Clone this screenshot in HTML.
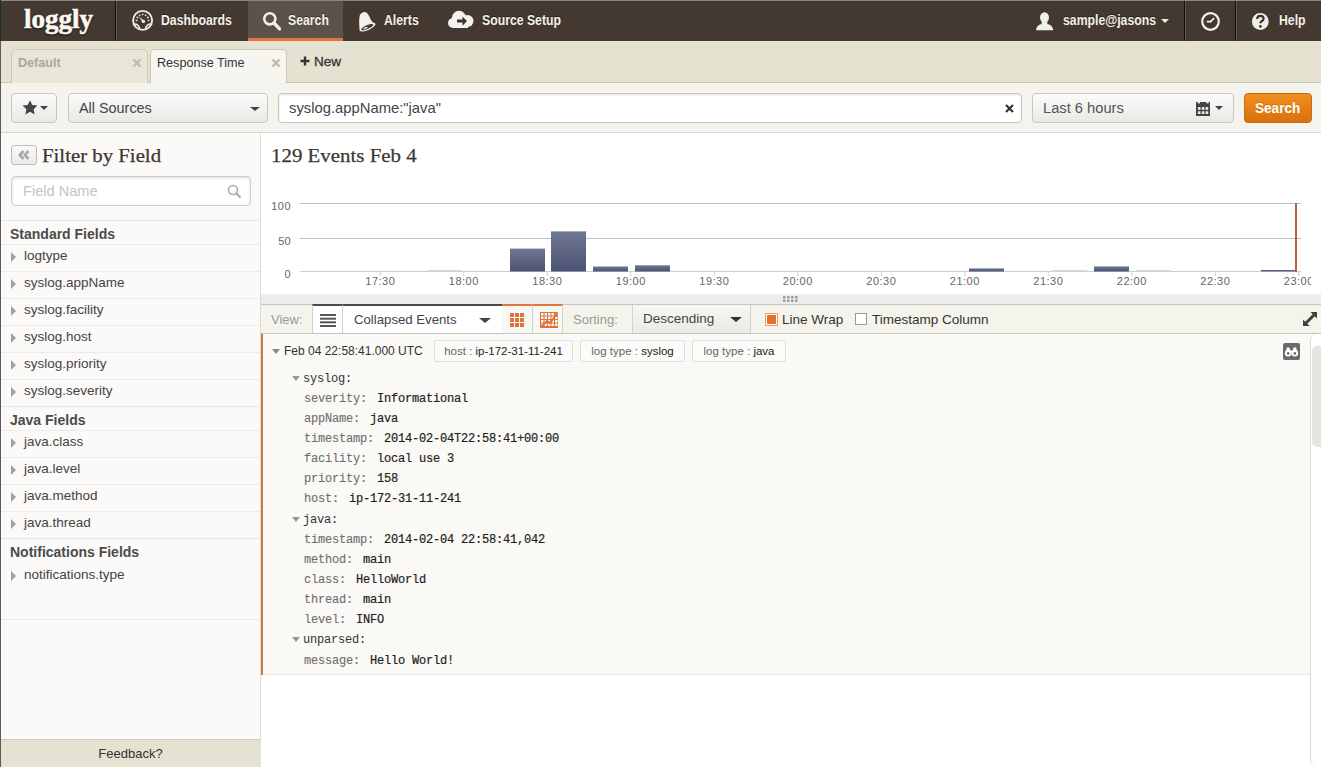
<!DOCTYPE html>
<html><head><meta charset="utf-8">
<style>
*{box-sizing:border-box;margin:0;padding:0}
html,body{width:1321px;height:767px;overflow:hidden;background:#fff;font-family:"Liberation Sans",sans-serif;position:relative}
.a{position:absolute}
/* nav */
#nav{left:0;top:0;width:1321px;height:41px;background:#433931;border-top:1px solid #8a8580}
#nav .sep{top:0;width:2px;height:40px;background:#110d0b;border-right:1px solid #635a53}
.nt{color:#f4f1ea;font-weight:700;font-size:14px;top:11px;white-space:nowrap;transform:scaleX(0.875);transform-origin:0 0;text-shadow:0 -1px 0 rgba(0,0,0,.4)}
#logo{left:24px;top:3px;font-family:"Liberation Serif",serif;font-weight:700;font-size:27px;color:#fbf8f0;-webkit-text-stroke:0.6px #fbf8f0;text-shadow:0 1px 2px #000}
/* tabs */
#tabs{left:0;top:41px;width:1321px;height:42px;background:#e6e2d2;border-bottom:1px solid #cbc6b4}
.tab{top:8px;height:34px;border:1px solid #cfcab8;border-bottom:none;border-radius:5px 5px 0 0}
.tab .t{left:6px;top:6px;font-size:12.6px;font-weight:700;white-space:nowrap}
.tab .x{top:7px;font-size:14px;font-weight:700;color:#bbb}
/* search row */
#srow{left:0;top:83px;width:1321px;height:50px;background:#f4f3ed;border-bottom:1px solid #d9d6cc}
.caret{width:0;height:0;border-style:solid;border-width:4px 4px 0 4px;border-color:#444 transparent transparent transparent}
.btn{border:1px solid #c9c7c0;border-radius:4px;background:linear-gradient(#fbfbfa,#e8e8e6)}
/* sidebar */
#side{left:0;top:133px;width:261px;height:634px;background:#fbfaf8;border-right:1px solid #dedbd3;border-left:1px solid #777}
.mono{font-family:"Liberation Mono",monospace;font-size:12px;letter-spacing:-0.2px;white-space:pre}
.fh{left:9px;font-size:14px;font-weight:700;color:#4b4b4b}
.tri{width:0;height:0;border-top:5px solid transparent;border-bottom:5px solid transparent;border-left:5px solid #a0a0a0}
.fn{font-size:13.5px;color:#444;white-space:nowrap}
</style></head>
<body>
<div id="nav" class="a">
  <div id="logo" class="a">loggly</div>
  <div class="a sep" style="left:115px"></div>
  <div class="a" style="left:248px;top:0;width:95px;height:40px;background:#5a524b"></div>
  <div class="a" style="left:248px;top:37px;width:95px;height:3px;background:#e07544"></div>
  <svg class="a" style="left:131px;top:8px" width="24" height="24" viewBox="0 0 24 24"><circle cx="11.6" cy="11.4" r="9.5" stroke="#f0ece6" stroke-width="1.9" fill="none"/><path d="M4.80 11.40 L6.40 11.40" stroke="#f0ece6" stroke-width="1.5"/><path d="M5.71 8.00 L7.10 8.80" stroke="#f0ece6" stroke-width="1.5"/><path d="M8.20 5.51 L9.00 6.90" stroke="#f0ece6" stroke-width="1.5"/><path d="M11.60 4.60 L11.60 6.20" stroke="#f0ece6" stroke-width="1.5"/><path d="M15.00 5.51 L14.20 6.90" stroke="#f0ece6" stroke-width="1.5"/><path d="M17.49 8.00 L16.10 8.80" stroke="#f0ece6" stroke-width="1.5"/><path d="M18.40 11.40 L16.80 11.40" stroke="#f0ece6" stroke-width="1.5"/><path d="M7.6 7.2 L12.9 11.6 L11.6 12.9 Z" fill="#f0ece6"/><circle cx="12.4" cy="12.4" r="1.7" fill="#f0ece6"/><path d="M2.6 15.2 Q6.8 14.2 9 19.8 M20.6 15.2 Q16.4 14.2 14.2 19.8" stroke="#f0ece6" stroke-width="1.5" fill="none"/></svg>
<svg class="a" style="left:260px;top:8px" width="24" height="24" viewBox="0 0 24 24"><circle cx="9.8" cy="9.8" r="5.6" stroke="#f2efea" stroke-width="2.6" fill="none"/><path d="M14 14 L19.5 19.8" stroke="#f2efea" stroke-width="3.4" stroke-linecap="round"/></svg>
<svg class="a" style="left:356px;top:8px" width="22" height="24" viewBox="0 0 22 24"><path d="M7.2 3.2 Q9.6 2.6 11.2 4.2 Q13.4 6.6 14.4 10 Q15.4 13 19.2 14.6 L19.4 16 Q12 22 3.8 21.5 Q3.2 18 3.2 15 Q3 9 3.8 6.2 Q5 3.8 7.2 3.2 Z" fill="#f4f2ee"/><ellipse cx="11.3" cy="18.2" rx="8.3" ry="3" transform="rotate(-24 11.3 18.2)" fill="#f4f2ee"/><ellipse cx="11.3" cy="18.1" rx="6.6" ry="1.9" transform="rotate(-24 11.3 18.1)" fill="#433931"/><ellipse cx="9.6" cy="19" rx="2.4" ry="0.9" transform="rotate(-24 9.6 19)" fill="#f4f2ee"/></svg>
<svg class="a" style="left:446px;top:8px" width="30" height="22" viewBox="0 0 30 22"><g fill="#f4f2ee"><circle cx="13" cy="9" r="7.2"/><circle cx="21.5" cy="12" r="6"/><circle cx="7" cy="14" r="5"/><rect x="7" y="12" width="15" height="7" /></g><path d="M11 10.5 H16.5 V7.5 L21 12 L16.5 16.7 V13.5 H11 Z" fill="#3a322d"/></svg>
<svg class="a" style="left:1034px;top:9px" width="22" height="22" viewBox="0 0 22 22"><g fill="#f2f0ec"><ellipse cx="10.5" cy="7.5" rx="4.5" ry="5.2"/><path d="M8 11 H13 L13.5 14 Q18.5 15 19.2 19.8 Q19 20.3 18.5 20.3 H2.5 Q2 20.3 2 19.8 Q2.7 15 7.5 14 Z"/></g></svg>
<div class="a caret" style="left:1161px;top:18px;border-width:4px 4px 0 4px;border-top-color:#f0ece6"></div>
<svg class="a" style="left:1199px;top:9px" width="23" height="23" viewBox="0 0 23 23"><circle cx="11.5" cy="11.5" r="8.3" stroke="#f4f2ee" stroke-width="2.2" fill="none"/><path d="M7.8 11.6 H11.5 L15.2 8.1" stroke="#f4f2ee" stroke-width="1.6" fill="none" stroke-linejoin="round"/><circle cx="11.5" cy="11.5" r="1.1" fill="#f4f2ee"/></svg>
<svg class="a" style="left:1250px;top:10px" width="21" height="21" viewBox="0 0 21 21"><circle cx="10.3" cy="10.5" r="8.4" fill="#f0eeea"/><path d="M7.2 8 Q7.2 4.8 10.4 4.8 Q13.6 4.8 13.6 7.6 Q13.6 9.3 11.6 10.3 Q10.4 10.9 10.4 12.2" stroke="#3a322d" stroke-width="2.2" fill="none"/><circle cx="10.4" cy="15.4" r="1.4" fill="#3a322d"/></svg>
<div class="a nt" style="left:161px">Dashboards</div>
  <div class="a nt" style="left:288px">Search</div>
  <div class="a nt" style="left:384px">Alerts</div>
  <div class="a nt" style="left:482px">Source Setup</div>
  <div class="a nt" style="left:1063px">sample@jasons</div>
  <div class="a sep" style="left:1184px"></div>
  <div class="a sep" style="left:1235px"></div>
  <div class="a nt" style="left:1279px">Help</div>
</div>
<div id="tabs" class="a">
  <div class="a tab" style="left:11px;width:137px;background:#e9e6d8"><div class="a t" style="color:#aaa89e">Default</div><svg class="a" style="left:120px;top:8px" width="10" height="10" viewBox="0 0 10 10"><path d="M1.5 1.5 L8.5 8.5 M8.5 1.5 L1.5 8.5" stroke="#bdbab0" stroke-width="2.4"/></svg></div>
  <div class="a tab" style="left:150px;width:137px;height:35px;background:#f6f5ef;border-color:#cbc6b4"><div class="a t" style="color:#333;font-weight:400">Response Time</div><svg class="a" style="left:120px;top:8px" width="10" height="10" viewBox="0 0 10 10"><path d="M1.5 1.5 L8.5 8.5 M8.5 1.5 L1.5 8.5" stroke="#bdbab0" stroke-width="2.4"/></svg></div>
  <svg class="a" style="left:300px;top:15px" width="10" height="10" viewBox="0 0 10 10"><path d="M5 0.5 V9.5 M0.5 5 H9.5" stroke="#333" stroke-width="2.4"/></svg><div class="a" style="left:314px;top:13px;font-size:13.5px;color:#333;-webkit-text-stroke:0.3px #333;white-space:nowrap">New</div>
</div>
<div id="srow" class="a">
  <div class="a btn" style="left:11px;top:10px;width:46px;height:30px">
    <svg class="a" style="left:10px;top:5px" width="16" height="17" viewBox="0 -0.3 15 15.6"><path d="M7.50 0.60 L9.62 5.09 L14.54 5.71 L10.92 9.11 L11.85 13.99 L7.50 11.60 L3.15 13.99 L4.08 9.11 L0.46 5.71 L5.38 5.09 Z" fill="#444"/></svg>
    <div class="a caret" style="left:28px;top:12px"></div>
  </div>
  <div class="a btn" style="left:68px;top:10px;width:200px;height:30px">
    <div class="a" style="left:10px;top:6px;font-size:14.4px;color:#444;white-space:nowrap">All Sources</div>
    <div class="a caret" style="left:181px;top:13px;border-width:4px 5px 0 5px"></div>
  </div>
  <div class="a" style="left:278px;top:10px;width:744px;height:30px;background:#fff;border:1px solid #c9c7c0;border-radius:4px;box-shadow:inset 0 1px 2px rgba(0,0,0,.12)">
    <div class="a" style="left:10px;top:6px;font-size:14.8px;color:#444;white-space:nowrap">syslog.appName:"java"</div>
    <svg class="a" style="left:726px;top:10px" width="9" height="9" viewBox="0 0 9 9"><path d="M1 1 L8 8 M8 1 L1 8" stroke="#333" stroke-width="2.2"/></svg>
  </div>
  <div class="a btn" style="left:1032px;top:10px;width:202px;height:30px">
    <div class="a" style="left:10px;top:6px;font-size:14.7px;color:#555;white-space:nowrap">Last 6 hours</div>
    <svg class="a" style="left:163px;top:8px" width="14" height="14" viewBox="0 0 14 14"><rect x="0" y="0" width="14" height="14" fill="#444"/><g fill="#efefed"><rect x="1.7" y="0" width="2.3" height="1.4"/><rect x="10.3" y="0" width="2.3" height="1.4"/><rect x="1.9" y="5.1" width="2.6" height="2.7"/><rect x="1.9" y="9.3" width="2.6" height="2.7"/><rect x="5.8" y="5.1" width="2.6" height="2.7"/><rect x="5.8" y="9.3" width="2.6" height="2.7"/><rect x="9.6" y="5.1" width="2.6" height="2.7"/><rect x="9.6" y="9.3" width="2.6" height="2.7"/></g></svg>
    <div class="a caret" style="left:182px;top:12px"></div>
  </div>
  <div class="a" style="left:1244px;top:10px;width:68px;height:30px;background:linear-gradient(#f0901f,#d9700c);border:1px solid #c76a10;border-radius:4px">
    <div class="a" style="left:10px;top:6px;font-size:14px;font-weight:700;color:#fff;white-space:nowrap;transform:scaleX(0.97);transform-origin:0 0;text-shadow:0 -1px 0 rgba(0,0,0,.15)">Search</div>
  </div>
</div>
<div id="side" class="a"></div>
<!--SIDE-->
<div class="a" style="left:11px;top:145px;width:26px;height:20px;border:1px solid #bdbbb5;border-radius:3px;background:linear-gradient(#fafafa,#ebebea)"><svg class="a" style="left:6px;top:4px" width="12" height="10" viewBox="0 0 12 10"><path d="M5.5 1 L1.8 5 L5.5 9 M10.5 1 L6.8 5 L10.5 9" stroke="#a8a8a8" stroke-width="2.6" fill="none"/></svg></div>
<div class="a" style="left:42px;top:145px;font-family:'Liberation Serif',serif;font-size:19px;color:#3d3733;white-space:nowrap;transform:scaleX(1.095);transform-origin:0 0;-webkit-text-stroke:0.25px #3d3733">Filter by Field</div>
<div class="a" style="left:11px;top:176px;width:240px;height:30px;background:#fff;border:1px solid #cfcdc6;border-radius:4px;box-shadow:inset 0 1px 3px rgba(0,0,0,.15)"><div class="a" style="left:11px;top:6px;font-size:14.6px;color:#c4c4c4;white-space:nowrap">Field Name</div><svg class="a" style="left:215px;top:7px" width="15" height="15" viewBox="0 0 15 15"><circle cx="6" cy="6" r="4.5" stroke="#aaa" stroke-width="1.6" fill="none"/><path d="M9.2 9.2 L13.5 13.5" stroke="#aaa" stroke-width="2.2"/></svg></div>
<div class="a" style="left:1px;top:220px;width:259px;height:1px;background:#e8e6e0"></div>
<div class="a fh" style="left:10px;top:226px">Standard Fields</div>
<div class="a" style="left:1px;top:244px;width:259px;height:1px;background:#edebe6"></div>
<div class="a tri" style="left:11px;top:252px"></div><div class="a fn" style="left:24px;top:248px">logtype</div>
<div class="a" style="left:1px;top:271px;width:259px;height:1px;background:#edebe6"></div>
<div class="a tri" style="left:11px;top:279px"></div><div class="a fn" style="left:24px;top:275px">syslog.appName</div>
<div class="a" style="left:1px;top:298px;width:259px;height:1px;background:#edebe6"></div>
<div class="a tri" style="left:11px;top:306px"></div><div class="a fn" style="left:24px;top:302px">syslog.facility</div>
<div class="a" style="left:1px;top:325px;width:259px;height:1px;background:#edebe6"></div>
<div class="a tri" style="left:11px;top:333px"></div><div class="a fn" style="left:24px;top:329px">syslog.host</div>
<div class="a" style="left:1px;top:352px;width:259px;height:1px;background:#edebe6"></div>
<div class="a tri" style="left:11px;top:360px"></div><div class="a fn" style="left:24px;top:356px">syslog.priority</div>
<div class="a" style="left:1px;top:379px;width:259px;height:1px;background:#edebe6"></div>
<div class="a tri" style="left:11px;top:387px"></div><div class="a fn" style="left:24px;top:383px">syslog.severity</div>
<div class="a" style="left:1px;top:406px;width:259px;height:1px;background:#e8e6e0"></div>
<div class="a fh" style="left:10px;top:412px">Java Fields</div>
<div class="a" style="left:1px;top:430px;width:259px;height:1px;background:#edebe6"></div>
<div class="a tri" style="left:11px;top:438px"></div><div class="a fn" style="left:24px;top:434px">java.class</div>
<div class="a" style="left:1px;top:457px;width:259px;height:1px;background:#edebe6"></div>
<div class="a tri" style="left:11px;top:465px"></div><div class="a fn" style="left:24px;top:461px">java.level</div>
<div class="a" style="left:1px;top:484px;width:259px;height:1px;background:#edebe6"></div>
<div class="a tri" style="left:11px;top:492px"></div><div class="a fn" style="left:24px;top:488px">java.method</div>
<div class="a" style="left:1px;top:511px;width:259px;height:1px;background:#edebe6"></div>
<div class="a tri" style="left:11px;top:519px"></div><div class="a fn" style="left:24px;top:515px">java.thread</div>
<div class="a" style="left:1px;top:538px;width:259px;height:1px;background:#e8e6e0"></div>
<div class="a fh" style="left:10px;top:544px">Notifications Fields</div>
<div class="a tri" style="left:11px;top:571px"></div><div class="a fn" style="left:24px;top:567px">notifications.type</div>
<div class="a" style="left:1px;top:619px;width:259px;height:1px;background:#edebe6"></div>
<div class="a" style="left:0;top:739px;width:261px;height:28px;background:#e6e2d2;border-top:1px solid #cfcab8;border-left:1px solid #777"><div class="a" style="left:0;width:259px;top:6px;text-align:center;font-size:13px;color:#333">Feedback?</div></div>
<!--/SIDE-->

<div class="a" style="left:261px;top:133px;width:1060px;height:161px;background:#fff"></div>
<div class="a" style="left:271px;top:145px;font-family:'Liberation Serif',serif;font-size:19px;color:#3d3733;white-space:nowrap;transform:scaleX(1.1);transform-origin:0 0;-webkit-text-stroke:0.25px #3d3733">129 Events Feb 4</div>
<svg class="a" style="left:261px;top:190px" width="1060" height="104" viewBox="261 190 1060 104"><line x1="300" y1="203.5" x2="1301" y2="203.5" stroke="#c0c0c0" stroke-width="1"/><text x="291" y="209.5" text-anchor="end" font-family="Liberation Sans" font-size="11" letter-spacing="0.5" fill="#666">100</text><line x1="300" y1="238.5" x2="1301" y2="238.5" stroke="#c0c0c0" stroke-width="1"/><text x="291" y="244.5" text-anchor="end" font-family="Liberation Sans" font-size="11" letter-spacing="0.3" fill="#666">50</text><line x1="300" y1="271.5" x2="1301" y2="271.5" stroke="#c8d0dc" stroke-width="1"/><text x="291" y="277.5" text-anchor="end" font-family="Liberation Sans" font-size="11" letter-spacing="0.3" fill="#666">0</text><defs><linearGradient id="bg" x1="0" y1="0" x2="0" y2="1"><stop offset="0" stop-color="#6f7794"/><stop offset="1" stop-color="#4c5372"/></linearGradient></defs><rect x="510" y="248.6" width="35" height="22.900000000000006" fill="url(#bg)"/><rect x="551" y="231.4" width="35" height="40.099999999999994" fill="url(#bg)"/><rect x="593" y="266.5" width="35" height="5.0" fill="url(#bg)"/><rect x="635" y="265.3" width="35" height="6.199999999999989" fill="url(#bg)"/><rect x="969" y="268.4" width="35" height="3.1000000000000227" fill="url(#bg)"/><rect x="1094" y="266.4" width="35" height="5.100000000000023" fill="url(#bg)"/><rect x="427" y="270" width="35" height="1.5" fill="#d3d8e2"/><rect x="1052" y="270" width="35" height="1.5" fill="#d3d8e2"/><rect x="1136" y="270" width="35" height="1.5" fill="#d3d8e2"/><rect x="1261" y="270" width="35" height="1.5" fill="#5a6180"/><line x1="380.3" y1="272" x2="380.3" y2="276" stroke="#c8d0dc"/><text x="380.3" y="285" text-anchor="middle" font-family="Liberation Sans" font-size="11" letter-spacing="0.5" fill="#666">17:30</text><line x1="463.8" y1="272" x2="463.8" y2="276" stroke="#c8d0dc"/><text x="463.8" y="285" text-anchor="middle" font-family="Liberation Sans" font-size="11" letter-spacing="0.5" fill="#666">18:00</text><line x1="547.3" y1="272" x2="547.3" y2="276" stroke="#c8d0dc"/><text x="547.3" y="285" text-anchor="middle" font-family="Liberation Sans" font-size="11" letter-spacing="0.5" fill="#666">18:30</text><line x1="630.8" y1="272" x2="630.8" y2="276" stroke="#c8d0dc"/><text x="630.8" y="285" text-anchor="middle" font-family="Liberation Sans" font-size="11" letter-spacing="0.5" fill="#666">19:00</text><line x1="714.3" y1="272" x2="714.3" y2="276" stroke="#c8d0dc"/><text x="714.3" y="285" text-anchor="middle" font-family="Liberation Sans" font-size="11" letter-spacing="0.5" fill="#666">19:30</text><line x1="797.8" y1="272" x2="797.8" y2="276" stroke="#c8d0dc"/><text x="797.8" y="285" text-anchor="middle" font-family="Liberation Sans" font-size="11" letter-spacing="0.5" fill="#666">20:00</text><line x1="881.3" y1="272" x2="881.3" y2="276" stroke="#c8d0dc"/><text x="881.3" y="285" text-anchor="middle" font-family="Liberation Sans" font-size="11" letter-spacing="0.5" fill="#666">20:30</text><line x1="964.8" y1="272" x2="964.8" y2="276" stroke="#c8d0dc"/><text x="964.8" y="285" text-anchor="middle" font-family="Liberation Sans" font-size="11" letter-spacing="0.5" fill="#666">21:00</text><line x1="1048.3" y1="272" x2="1048.3" y2="276" stroke="#c8d0dc"/><text x="1048.3" y="285" text-anchor="middle" font-family="Liberation Sans" font-size="11" letter-spacing="0.5" fill="#666">21:30</text><line x1="1131.8" y1="272" x2="1131.8" y2="276" stroke="#c8d0dc"/><text x="1131.8" y="285" text-anchor="middle" font-family="Liberation Sans" font-size="11" letter-spacing="0.5" fill="#666">22:00</text><line x1="1215.3" y1="272" x2="1215.3" y2="276" stroke="#c8d0dc"/><text x="1215.3" y="285" text-anchor="middle" font-family="Liberation Sans" font-size="11" letter-spacing="0.5" fill="#666">22:30</text><line x1="1298.8" y1="272" x2="1298.8" y2="276" stroke="#c8d0dc"/><defs><clipPath id="cl"><rect x="261" y="190" width="1050" height="104"/></clipPath></defs><text clip-path="url(#cl)" x="1298.8" y="285" text-anchor="middle" font-family="Liberation Sans" font-size="11" letter-spacing="0.5" fill="#666">23:00</text><rect x="1295" y="203" width="2" height="69" fill="#b8613a"/></svg>
<div class="a" style="left:261px;top:294px;width:1060px;height:10px;background:#ececec"></div>
<svg class="a" style="left:782px;top:295px" width="18" height="8" viewBox="0 0 18 8"><g fill="#9a9a9a"><rect x="1" y="1.0" width="2.5" height="2.5" rx="0.5"/><rect x="1" y="4.5" width="2.5" height="2.5" rx="0.5"/><rect x="5" y="1.0" width="2.5" height="2.5" rx="0.5"/><rect x="5" y="4.5" width="2.5" height="2.5" rx="0.5"/><rect x="9" y="1.0" width="2.5" height="2.5" rx="0.5"/><rect x="9" y="4.5" width="2.5" height="2.5" rx="0.5"/><rect x="13" y="1.0" width="2.5" height="2.5" rx="0.5"/><rect x="13" y="4.5" width="2.5" height="2.5" rx="0.5"/></g></svg>
<div class="a" style="left:261px;top:304px;width:1060px;height:30px;background:#f4f4ec;border-top:1px solid #c8c6ba;border-bottom:1px solid #c8c6ba"></div>
<div class="a" style="left:271px;top:312px;font-size:13px;color:#999;white-space:nowrap">View:</div>
<div class="a" style="left:312px;top:304px;width:31px;height:29px;background:#fff;border-left:1px solid #d5d3c8;border-right:1px solid #d5d3c8;border-top:2px solid #4a4a4a"><svg class="a" style="left:7px;top:8px" width="16" height="13" viewBox="0 0 16 13"><g fill="#555"><rect x="0" y="0" width="16" height="2"/><rect x="0" y="3.7" width="16" height="2"/><rect x="0" y="7.3" width="16" height="2"/><rect x="0" y="11" width="16" height="2"/></g></svg></div>
<div class="a" style="left:343px;top:304px;width:160px;height:29px;background:#fff;border-right:1px solid #d5d3c8;border-top:2px solid #4a4a4a"><div class="a" style="left:11px;top:6px;font-size:13.2px;color:#444;white-space:nowrap">Collapsed Events</div><div class="a caret" style="left:136px;top:12px;border-width:5px 6px 0 6px;border-top-color:#444"></div></div>
<div class="a" style="left:502px;top:304px;width:31px;height:29px;background:#f7f7f3;border-right:1px solid #d5d3c8;border-top:2px solid #e07a3c"><svg class="a" style="left:8px;top:7px" width="14" height="14" viewBox="0 0 14 14"><g fill="#e0733a"><rect x="0" y="0" width="4" height="4"/><rect x="0" y="5" width="4" height="4"/><rect x="0" y="10" width="4" height="4"/><rect x="5" y="0" width="4" height="4"/><rect x="5" y="5" width="4" height="4"/><rect x="5" y="10" width="4" height="4"/><rect x="10" y="0" width="4" height="4"/><rect x="10" y="5" width="4" height="4"/><rect x="10" y="10" width="4" height="4"/></g></svg></div>
<div class="a" style="left:533px;top:304px;width:30px;height:29px;background:#f7f7f3;border-right:1px solid #d5d3c8;border-top:2px solid #e07a3c"><svg class="a" style="left:7px;top:6px" width="18" height="16" viewBox="0 0 18 16"><g stroke="#e0733a" stroke-width="1" fill="none"><path d="M0.5 0 V15.5 H18"/><path d="M4.0 0 V15.5"/><path d="M7.5 0 V15.5"/><path d="M11.0 0 V15.5"/><path d="M14.5 0 V15.5"/><path d="M18.0 0 V15.5"/><path d="M0 0.5 H18"/><path d="M0 4.0 H18"/><path d="M0 7.5 H18"/><path d="M0 11.0 H18"/><path d="M0 14.5 H18"/></g><path d="M1 15 L7 9 L10 11 L16 3" stroke="#e0733a" stroke-width="2" fill="none"/><circle cx="16" cy="3" r="2" fill="#e0733a"/></svg></div>
<div class="a" style="left:573px;top:312px;font-size:13px;color:#999;white-space:nowrap">Sorting:</div>
<div class="a" style="left:632px;top:305px;width:119px;height:28px;background:linear-gradient(#f7f7f5,#e9e9e6);border-left:1px solid #d5d3c8;border-right:1px solid #d5d3c8"><div class="a" style="left:10px;top:6px;font-size:13.5px;color:#444;white-space:nowrap">Descending</div><div class="a caret" style="left:97px;top:12px;border-width:5px 6px 0 6px;border-top-color:#333"></div></div>
<div class="a" style="left:765px;top:313px;width:13px;height:13px;border:1px solid #e8a070;background:#fff"><div class="a" style="left:1px;top:1px;width:9px;height:9px;background:#e4702a"></div></div>
<div class="a" style="left:782px;top:312px;font-size:13.5px;color:#333;white-space:nowrap">Line Wrap</div>
<div class="a" style="left:855px;top:313px;width:12px;height:12px;border:1px solid #999;background:#fff"></div>
<div class="a" style="left:872px;top:312px;font-size:13.5px;color:#333;white-space:nowrap">Timestamp Column</div>
<svg class="a" style="left:1302px;top:311px" width="16" height="16" viewBox="0 0 16 16"><g fill="#3e3e3e"><path d="M8.5 1 H15 V7.5 Z"/><path d="M1 8.5 V15 H7.5 Z"/></g><path d="M12 4 L4 12" stroke="#3e3e3e" stroke-width="3"/></svg>
<div class="a" style="left:261px;top:334px;width:1049px;height:341px;background:#faf9f6;border-bottom:1px solid #e8e6e0"></div>
<div class="a" style="left:261px;top:334px;width:2px;height:341px;background:#c87a4a"></div>
<div class="a caret" style="left:272px;top:349px;border-width:5px 4px 0 4px;border-top-color:#888"></div>
<div class="a" style="left:284px;top:344px;font-size:12px;color:#333;white-space:nowrap">Feb 04 22:58:41.000 UTC</div>
<div class="a" style="left:434px;top:340px;width:139px;height:22px;background:#fbfbf9;border:1px solid #e2e0d8;border-radius:2px;font-size:11.5px;white-space:nowrap;text-align:center;padding-top:4px"><span style="color:#666">host : </span><span style="color:#222">ip-172-31-11-241</span></div>
<div class="a" style="left:580px;top:340px;width:105px;height:22px;background:#fbfbf9;border:1px solid #e2e0d8;border-radius:2px;font-size:11.5px;white-space:nowrap;text-align:center;padding-top:4px"><span style="color:#666">log type : </span><span style="color:#222">syslog</span></div>
<div class="a" style="left:692px;top:340px;width:94px;height:22px;background:#fbfbf9;border:1px solid #e2e0d8;border-radius:2px;font-size:11.5px;white-space:nowrap;text-align:center;padding-top:4px"><span style="color:#666">log type : </span><span style="color:#222">java</span></div>
<div class="a" style="left:1283px;top:343px;width:17px;height:17px;background:#6a6a6a;border-radius:2px"><svg class="a" style="left:0;top:0" width="17" height="17" viewBox="0 0 17 17"><g fill="#fff"><circle cx="5.2" cy="10.2" r="3.3"/><circle cx="11.8" cy="10.2" r="3.3"/><path d="M4 4.5 L6.5 4.5 L7.5 9 L2.5 9 Z"/><path d="M10.5 4.5 L13 4.5 L14.5 9 L9.5 9 Z"/><rect x="7" y="7.5" width="3" height="2"/></g><circle cx="5.2" cy="10.4" r="1.3" fill="#6a6a6a"/><circle cx="11.8" cy="10.4" r="1.3" fill="#6a6a6a"/></svg></div>
<div class="a" style="left:1310px;top:334px;width:11px;height:432px;background:#fff;border-left:1px solid #d8d8d8;border-radius:6px 0 0 6px"></div>
<div class="a" style="left:1312px;top:346px;width:9px;height:101px;background:#e6e4df;border-radius:5px 0 0 5px"></div>
<div class="a" style="left:0;top:0;width:1px;height:41px;background:#1d3328"></div>
<div class="a" style="left:0;top:41px;width:1px;height:726px;background:#5a5a58"></div>
<!--MONO-->
<div class="a caret" style="left:292px;top:376px;border-width:5px 4.5px 0 4.5px;border-top-color:#999"></div>
<div class="a mono" style="left:303px;top:372px;color:#333">syslog:</div>
<div class="a mono" style="left:304px;top:392px"><span style="color:#6e6e6e;-webkit-text-stroke:0.1px #6e6e6e">severity:</span><span style="color:#1e1e1e;margin-left:10px;-webkit-text-stroke:0.2px #1e1e1e">Informational</span></div>
<div class="a mono" style="left:304px;top:412px"><span style="color:#6e6e6e;-webkit-text-stroke:0.1px #6e6e6e">appName:</span><span style="color:#1e1e1e;margin-left:10px;-webkit-text-stroke:0.2px #1e1e1e">java</span></div>
<div class="a mono" style="left:304px;top:432px"><span style="color:#6e6e6e;-webkit-text-stroke:0.1px #6e6e6e">timestamp:</span><span style="color:#1e1e1e;margin-left:10px;-webkit-text-stroke:0.2px #1e1e1e">2014-02-04T22:58:41+00:00</span></div>
<div class="a mono" style="left:304px;top:452px"><span style="color:#6e6e6e;-webkit-text-stroke:0.1px #6e6e6e">facility:</span><span style="color:#1e1e1e;margin-left:10px;-webkit-text-stroke:0.2px #1e1e1e">local use 3</span></div>
<div class="a mono" style="left:304px;top:472px"><span style="color:#6e6e6e;-webkit-text-stroke:0.1px #6e6e6e">priority:</span><span style="color:#1e1e1e;margin-left:10px;-webkit-text-stroke:0.2px #1e1e1e">158</span></div>
<div class="a mono" style="left:304px;top:492px"><span style="color:#6e6e6e;-webkit-text-stroke:0.1px #6e6e6e">host:</span><span style="color:#1e1e1e;margin-left:10px;-webkit-text-stroke:0.2px #1e1e1e">ip-172-31-11-241</span></div>
<div class="a caret" style="left:292px;top:517px;border-width:5px 4.5px 0 4.5px;border-top-color:#999"></div>
<div class="a mono" style="left:303px;top:513px;color:#333">java:</div>
<div class="a mono" style="left:304px;top:533px"><span style="color:#6e6e6e;-webkit-text-stroke:0.1px #6e6e6e">timestamp:</span><span style="color:#1e1e1e;margin-left:10px;-webkit-text-stroke:0.2px #1e1e1e">2014-02-04 22:58:41,042</span></div>
<div class="a mono" style="left:304px;top:553px"><span style="color:#6e6e6e;-webkit-text-stroke:0.1px #6e6e6e">method:</span><span style="color:#1e1e1e;margin-left:10px;-webkit-text-stroke:0.2px #1e1e1e">main</span></div>
<div class="a mono" style="left:304px;top:573px"><span style="color:#6e6e6e;-webkit-text-stroke:0.1px #6e6e6e">class:</span><span style="color:#1e1e1e;margin-left:10px;-webkit-text-stroke:0.2px #1e1e1e">HelloWorld</span></div>
<div class="a mono" style="left:304px;top:593px"><span style="color:#6e6e6e;-webkit-text-stroke:0.1px #6e6e6e">thread:</span><span style="color:#1e1e1e;margin-left:10px;-webkit-text-stroke:0.2px #1e1e1e">main</span></div>
<div class="a mono" style="left:304px;top:613px"><span style="color:#6e6e6e;-webkit-text-stroke:0.1px #6e6e6e">level:</span><span style="color:#1e1e1e;margin-left:10px;-webkit-text-stroke:0.2px #1e1e1e">INFO</span></div>
<div class="a caret" style="left:292px;top:637px;border-width:5px 4.5px 0 4.5px;border-top-color:#999"></div>
<div class="a mono" style="left:303px;top:633px;color:#333">unparsed:</div>
<div class="a mono" style="left:304px;top:654px"><span style="color:#6e6e6e;-webkit-text-stroke:0.1px #6e6e6e">message:</span><span style="color:#1e1e1e;margin-left:10px;-webkit-text-stroke:0.2px #1e1e1e">Hello World!</span></div>
<!--/MONO-->
</body></html>
